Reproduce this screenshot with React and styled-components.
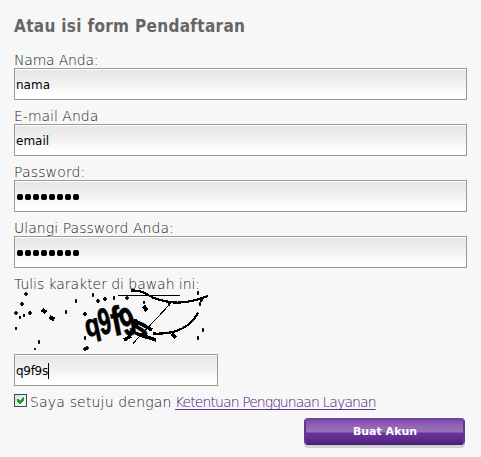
import React from "react";
import styled, { createGlobalStyle } from "styled-components";

const GlobalStyle = createGlobalStyle`
  * { box-sizing: border-box; }
  body { margin: 0; background: #f7f7f7; }
`;

const Form = styled.form`
  width: 481px;
  height: 457px;
  overflow: hidden;
  padding: 14px 14px 0;
  background: #f7f7f7;
  color: #222;
  font: 200 14px/24px "DejaVu Sans", Verdana, sans-serif;
`;

const Title = styled.h1`
  margin: 0 0 6px;
  height: 24px;
  font: bold 17px/24px "DejaVu Sans Condensed", "DejaVu Sans", sans-serif;
  font-stretch: condensed;
  letter-spacing: ${(p) => p.$spacing}px;
  color: #666;
  white-space: nowrap;
`;

const Label = styled.label`
  display: block;
  width: max-content;
  height: 24px;
  padding-top: 4px;
  line-height: 24px;
  letter-spacing: ${(p) => p.$spacing}px;
  white-space: nowrap;
`;

const Field = styled.div`
  display: flex;
  align-items: center;
  width: ${(p) => p.$width || 453}px;
  height: 32px;
  padding: 1px 1px 0;
  border: 1px solid #999;
  background: linear-gradient(#fff 0 1px, #e7e7e7 1px, #efefef 12px, #fafafa 21px, #fff 26px);
  color: #000;
  font: 400 12px/16px "DejaVu Sans", sans-serif;
`;

const Value = styled.span`
  letter-spacing: ${(p) => p.$spacing || 0}px;
`;

const Dots = styled.span`
  display: flex;
  gap: 2px;
  padding: 1px 0 0 1px;
`;

const Dot = styled.i`
  width: 6px;
  height: 6px;
  border-radius: 2px;
  background: #000;
`;

const Caret = styled.i`
  width: 1px;
  height: 16px;
  background: #000;
`;

const Captcha = styled.svg`
  display: block;
  width: 200px;
  height: 64px;
  margin-top: -2px;
  overflow: visible;
`;

const Agreement = styled.div`
  display: flex;
  align-items: center;
  height: 24px;
  margin-top: 4px;
  white-space: nowrap;
`;

const Checkbox = styled.span`
  width: 13px;
  height: 13px;
  margin: -3px 3px 0 0;
  border: 1px solid #1c5180;
  background: linear-gradient(135deg, #dcdcd7, #fff);
  svg { display: block; }
`;

const Phrase = styled.span`
  width: 145px;
  letter-spacing: ${(p) => p.$spacing}px;
`;

const Terms = styled.a`
  color: #4b1485;
  letter-spacing: ${(p) => p.$spacing}px;
  text-decoration: underline 1px #663399;
  text-underline-offset: 2px;
  text-decoration-skip-ink: none;
`;

const Submit = styled.button`
  display: block;
  width: 161px;
  height: 27px;
  margin: 4px 2px 0 auto;
  padding: 0 0 0 1px;
  border: 2px solid;
  border-color: #6b4799 #5e3a8d #47226e;
  border-radius: 4px;
  background: linear-gradient(#8845b3 0, #9265b5 6px, #9873bb 12px, #6a359b 13px, #552585 100%);
  box-shadow: 0 3px 0 #d2d2d2;
  color: #fff;
  font: bold 11px/20px "DejaVu Sans", sans-serif;
  letter-spacing: ${(p) => p.$spacing}px;
`;

const specks = [
  [26, 294, 1.4], [22, 304, 1.7], [16, 313, 1.5], [20, 317, 1], [24, 315, 1],
  [30, 313, 1.8], [16, 328, 1], [39, 342, 1.2], [35, 349, 0.8],
  [66, 312, 1.2], [76, 301, 1.2], [93, 295, 1.2], [98, 301, 1.8], [105, 299, 1.9],
  [114, 298, 1.1], [127, 298, 1.6], [85, 314, 1.9], [85, 338, 1.2], [85, 349, 1.5],
  [87, 348, 1.4], [198, 293, 1.3], [200, 304, 1.2], [198, 338, 1.2], [203, 330, 1.2],
  [169, 304, 1.2], [144, 302, 1],
];

const glyphs = [
  { char: "q", x: 87, y: 337, angle: -12, sx: 0.78, size: 31 },
  { char: "9", x: 101, y: 335, angle: -12, sx: 0.6, size: 37 },
  { char: "f", x: 114, y: 336, angle: -11, sx: 0.75, size: 41 },
  { char: "9", x: 125, y: 337, angle: -18, sx: 0.65, size: 40 },
  { char: "s", x: 128, y: 331, angle: 22, sx: 1.5, size: 24 },
];

function CaptchaImage() {
  return (
    <Captcha viewBox="14 290 200 64" shapeRendering="crispEdges">
      {specks.map(([x, y, r], i) => (
        <path
          key={i}
          d={`M${x - r} ${y}L${x} ${y - r - 0.5}L${x + r} ${y}L${x} ${y + r + 0.5}Z`}
          stroke="#000"
          strokeWidth="0.8"
        />
      ))}
      <g fill="none" stroke="#000" strokeLinecap="butt">
        <path d="M42 309.5L46 312.5M49.500 317L54.500 319.500M143.500 306L147 310.500M172 334L176 338" strokeWidth="4" />
        <path d="M118 295.500H180" strokeWidth="1" />
        <path d="M133 343.500L171 303" strokeWidth="1" />
        <path d="M131 290.500Q141 290 148 295Q158 301 174 302.500Q188 303.500 208 296" strokeWidth="2.200" />
        <path d="M153 333.500C178 335 192 325 198 312.500M201 302L203 297" strokeWidth="2.200" />
        <path d="M134 320L152 330M137 334L156 340M124 340L131 336" strokeWidth="3.500" />
      </g>
      {glyphs.map(({ char, x, y, angle, sx, size }, i) => (
        <text
          key={i}
          transform={`translate(${x} ${y}) rotate(${angle}) scale(${sx} 1)`}
          fontFamily="Liberation Sans, sans-serif"
          fontWeight="bold"
          fontSize={size}
          stroke="#000"
          strokeWidth="0.7"
        >
          {char}
        </text>
      ))}
    </Captcha>
  );
}

function PasswordDots() {
  return (
    <Dots>
      {Array.from({ length: 8 }, (_, i) => <Dot key={i} />)}
    </Dots>
  );
}

export default function App() {
  return (
    <>
      <GlobalStyle />
      <Form>
        <Title $spacing={0.32}>Atau isi form Pendaftaran</Title>
        <Label $spacing={-0.2}>Nama Anda:</Label>
        <Field><Value>nama</Value></Field>
        <Label $spacing={0}>E-mail Anda</Label>
        <Field><Value>email</Value></Field>
        <Label $spacing={0.15}>Password:</Label>
        <Field><PasswordDots /></Field>
        <Label $spacing={0.05}>Ulangi Password Anda:</Label>
        <Field><PasswordDots /></Field>
        <Label $spacing={-0.05}>Tulis karakter di bawah ini:</Label>
        <CaptchaImage />
        <Field $width={204}>
          <Value $spacing={-0.3}>q9f9s</Value>
          <Caret />
        </Field>
        <Agreement>
          <Checkbox>
            <svg width="11" height="11" viewBox="0 0 11 11" shapeRendering="crispEdges">
              <path d="M2 4V7L4 9H5L9 5V2H8L4.500 5.500L3 4Z" fill="#21a121" />
            </svg>
          </Checkbox>
          <Phrase $spacing={0.17}>Saya setuju dengan</Phrase>
          <Terms $spacing={-0.92}>Ketentuan Penggunaan Layanan</Terms>
        </Agreement>
        <Submit type="button" $spacing={0}>Buat Akun</Submit>
      </Form>
    </>
  );
}
